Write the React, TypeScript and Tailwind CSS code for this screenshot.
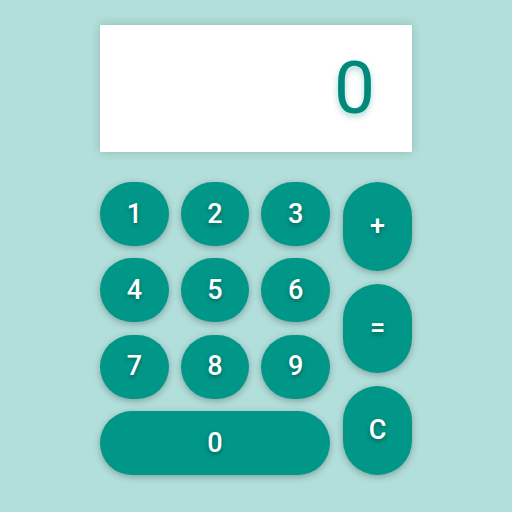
import React, { useState } from 'react';

const digits = ['1', '2', '3', '4', '5', '6', '7', '8', '9'];

const keyBase =
  'flex items-center justify-center rounded-full bg-[#009688] text-white text-[27px] font-medium shadow-[0_2px_7px_rgba(0,0,0,0.28)] [text-shadow:0_2px_4px_rgba(0,0,0,0.35)]';

export default function App() {
  const [value, setValue] = useState('0');

  const press = (d: string) => setValue((v) => (v === '0' ? d : v + d));

  return (
    <div className="h-[512px] w-full bg-[#b2dfdb] font-['Roboto',sans-serif]">
      <div className="mx-auto w-[312px] pt-[25px]">
        {/* Display */}
        <div className="flex h-[127px] items-center justify-end bg-white pr-[37px] shadow-[0_0_10px_rgba(0,0,0,0.18)]">
          <span className="text-[73px] leading-none text-[#00897b] [text-shadow:0_3px_6px_rgba(0,137,123,0.35)]">
            {value}
          </span>
        </div>

        {/* Keypad */}
        <div className="mt-[30px] flex gap-[13px]">
          <div className="grid w-[230px] grid-cols-3 gap-x-[12px] gap-y-[12px]">
            {digits.map((d) => (
              <button key={d} onClick={() => press(d)} className={`${keyBase} h-[64px]`}>
                {d}
              </button>
            ))}
            <button onClick={() => press('0')} className={`${keyBase} col-span-3 h-[64px]`}>
              0
            </button>
          </div>

          <div className="flex flex-1 flex-col gap-[13px]">
            <button className={`${keyBase} h-[89px]`}>+</button>
            <button className={`${keyBase} h-[89px]`}>=</button>
            <button onClick={() => setValue('0')} className={`${keyBase} h-[89px]`}>
              C
            </button>
          </div>
        </div>
      </div>
    </div>
  );
}
